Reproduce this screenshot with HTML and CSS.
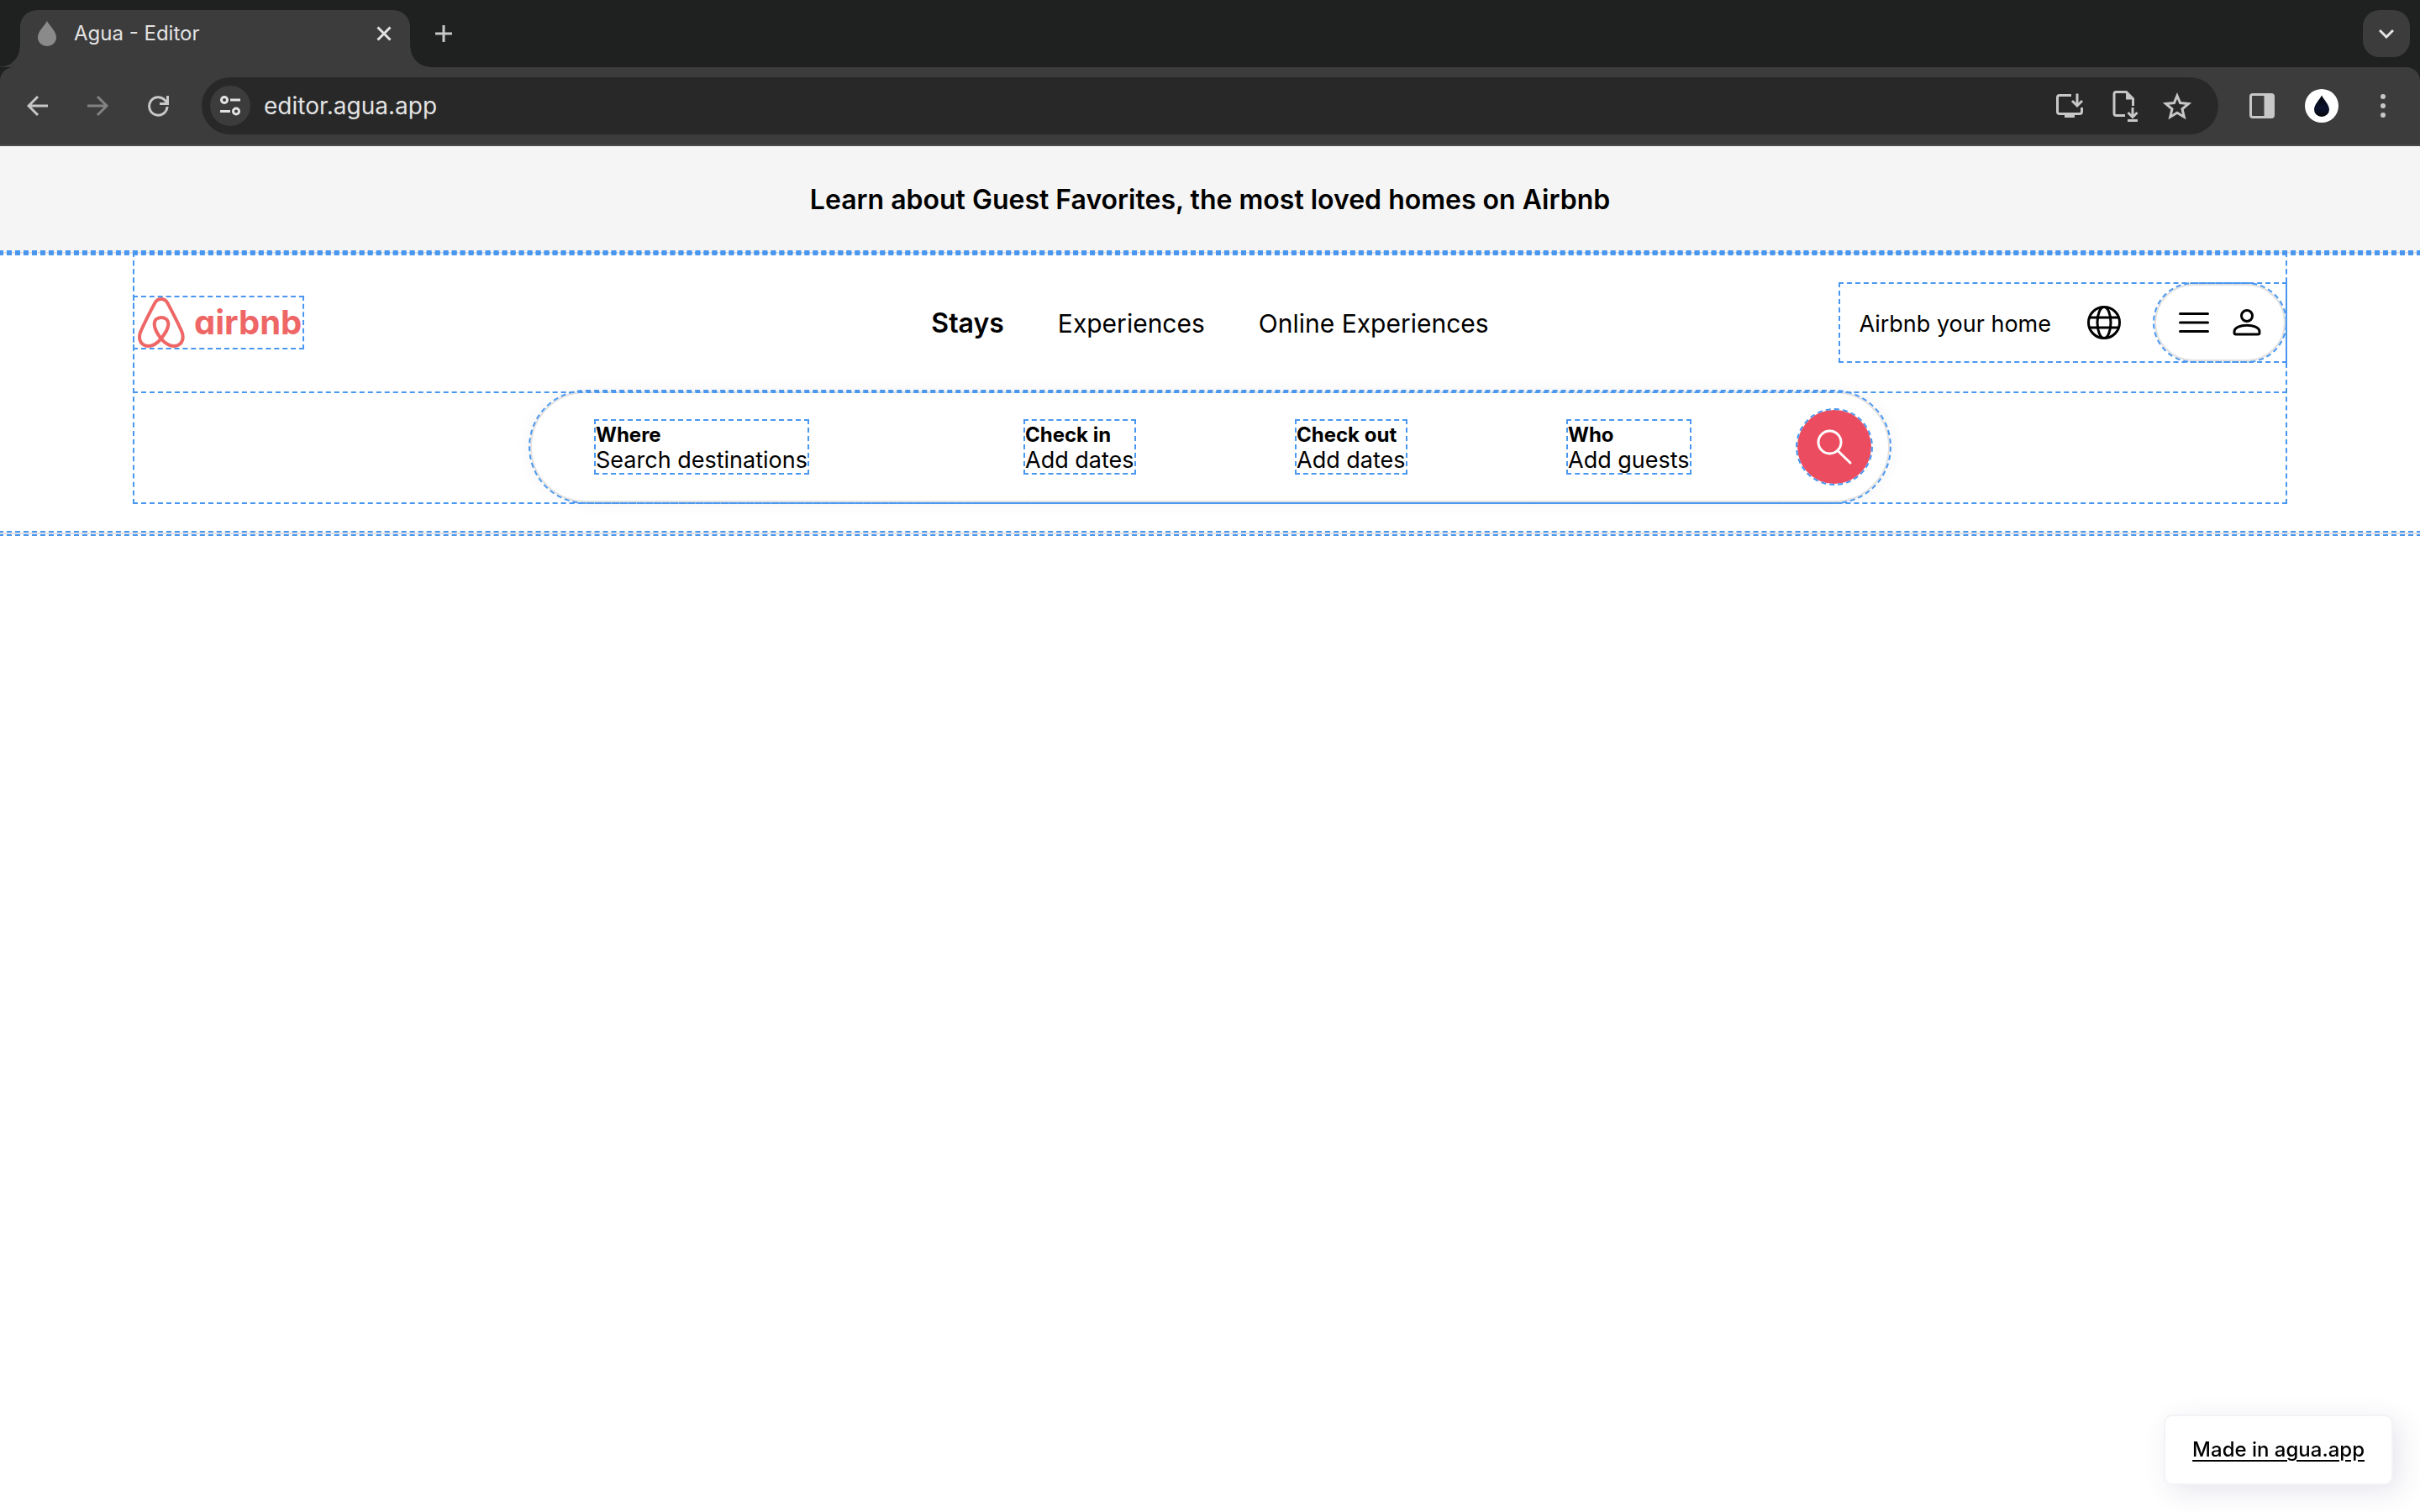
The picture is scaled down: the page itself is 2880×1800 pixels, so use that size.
FILE: index.html
```html
<!DOCTYPE html>
<html lang="en">
<head>
<meta charset="utf-8">
<meta name="viewport" content="width=device-width, initial-scale=1">
<title>Agua - Editor</title>
<link rel="stylesheet" href="styles.css">
</head>
<body>
<div class="browser">
  <div class="tabstrip">
    <div class="tab">
      <svg class="tab-drop" viewBox="0 0 22 30" aria-hidden="true"><path d="M11 0C8 6 0 12 0 19.500a11 10.500 0 0 0 22 0C22 12 14 6 11 0z"/></svg>
      <span class="tab-title">Agua - Editor</span>
      <button class="icon-button tab-close" aria-label="Close tab"><svg width="18" height="18" viewBox="0 0 18 18"><path d="M1.500 1.500l15 15M16.500 1.500l-15 15"/></svg></button>
    </div>
    <button class="icon-button tab-new" aria-label="New tab"><svg width="20" height="20" viewBox="0 0 20 20"><path d="M10 0v20M0 10h20"/></svg></button>
    <button class="icon-button tab-search" aria-label="Search tabs"><svg width="18" height="12" viewBox="0 0 18 12"><path d="M1 2l8 8 8-8"/></svg></button>
  </div>
  <div class="toolbar">
    <button class="icon-button" aria-label="Back"><svg width="26" height="26" viewBox="0 0 26 26"><path d="M25 13H2M13 2L2 13l11 11"/></svg></button>
    <button class="icon-button is-disabled" aria-label="Forward"><svg width="26" height="26" viewBox="0 0 26 26"><path d="M0 13h23M12 2l11 11-11 11"/></svg></button>
    <button class="icon-button" aria-label="Reload"><svg width="26" height="26" viewBox="0 0 26 26"><path d="M23 14A10.700 10.700 0 1 1 20 6l3 3.500M23.500 1v9.500h-9.500"/></svg></button>
    <div class="omnibox">
      <button class="icon-button site-info" aria-label="Site information"><svg width="24" height="24" viewBox="0 0 24 24"><circle cx="5" cy="5" r="3.500"/><path d="M12 5h12M0 18.500h12"/><circle cx="19" cy="18.500" r="3.500"/></svg></button>
      <input class="url" type="text" aria-label="Address" value="editor.agua.app">
      <div class="omnibox-actions">
        <button class="icon-button install" aria-label="Install app"><svg width="34" height="32" viewBox="0 0 34 32"><path d="M19 3.500H5Q2.500 3.500 2.500 6v17q0 2.500 2.500 2.500h24q2.500 0 2.500-2.500v-5M26 1.500v14M20 10l6 6 6-6"/><path class="solid" d="M11 26h12v4H11z"/></svg></button>
        <button class="icon-button" aria-label="Save page"><svg width="32" height="38" viewBox="0 0 32 38"><path d="M15 30.500H4.500q-2.500 0-2.500-2.500V5q0-2.500 2.500-2.500h12l8 8V19M24 21v12M18.500 27l5.500 5.500 5.500-5.500M18 36.500h12"/><path class="solid" d="M16 1.500v10h10z"/></svg></button>
        <button class="icon-button" aria-label="Bookmark this tab"><svg width="34" height="32" viewBox="0 0 34 32"><path d="M17 4l3.600 8.600 9.900.8-7.500 6.400 2.300 9.400-8.300-5-8.300 5 2.300-9.400-7.500-6.400 9.900-.8z"/></svg></button>
      </div>
    </div>
    <div class="toolbar-end">
      <button class="icon-button" aria-label="Side panel"><svg width="30" height="30" viewBox="0 0 30 30"><rect x="1.500" y="1.500" width="27" height="27" rx="2.500"/><path class="solid" d="M17.500 1h10v28h-10z"/></svg></button>
      <button class="icon-button avatar" aria-label="Profile"><svg width="40" height="40" viewBox="0 0 40 40"><defs><linearGradient id="ink" x2="0" y2="1"><stop offset="0" stop-color="#050608"/><stop offset=".6" stop-color="#0c1330"/><stop offset="1" stop-color="#050608"/></linearGradient></defs><path fill="url(#ink)" d="M20 7.500C17.500 13 11 18 11 24.500a9 8.500 0 0 0 18 0C29 18 22.500 13 20 7.500z"/></svg></button>
      <button class="icon-button" aria-label="Menu"><svg width="6" height="28" viewBox="0 0 6 28"><circle class="solid" cx="3" cy="3" r="3"/><circle class="solid" cx="3" cy="14" r="3"/><circle class="solid" cx="3" cy="25" r="3"/></svg></button>
    </div>
  </div>
</div>

<main class="page">
  <div class="banner">Learn about Guest Favorites, the most loved homes on Airbnb</div>
  <header class="header">
    <div class="header-inner">
      <div class="container">
        <div class="top-row">
          <a class="logo" href="#"><svg width="58" height="60" viewBox="69 222 174 180" aria-hidden="true"><path d="M155 228C143 228 138 232 133 242C118 270 92 322 83 342C78 352 78 358 78 364C78 384 92 396 110 396C126 396 142 385 155 370C170 350 181 335 181 318C181 302 170 294 155.500 294C141 294 131 302 131 318C131 335 141 350 155 370C169 385 184 396 201 396C219 396 233 384 233 364C233 358 233 352 228 342C219 322 193 270 178 242C173 232 167 228 155 228Z"/></svg><span>airbnb</span></a>
          <nav class="nav">
            <a class="is-active" href="#">Stays</a>
            <a href="#">Experiences</a>
            <a href="#">Online Experiences</a>
          </nav>
          <div class="actions">
            <a class="host" href="#">Airbnb your home</a>
            <button class="plain" aria-label="Language"><svg width="42" height="42" viewBox="0 0 42 42"><circle cx="21" cy="21" r="18.500"/><ellipse cx="21" cy="21" rx="8" ry="18.500"/><path d="M3.500 15h35M3.500 27h35"/></svg></button>
            <button class="plain menu" aria-label="Account menu"><svg width="36" height="26" viewBox="0 0 36 26"><path stroke-linecap="round" d="M1.500 2.500h33M1.500 13h33M1.500 23.500h33"/></svg><svg width="34" height="32" viewBox="0 0 34 32"><circle cx="17" cy="8" r="6.500"/><path stroke-linejoin="round" d="M2 27v1q0 2 2 2h26q2 0 2-2v-1C32 16.500 2 16.500 2 27z"/></svg></button>
          </div>
        </div>
        <form class="search">
          <button type="button" class="field"><strong>Where</strong><span>Search destinations</span></button>
          <button type="button" class="field"><strong>Check in</strong><span>Add dates</span></button>
          <button type="button" class="field"><strong>Check out</strong><span>Add dates</span></button>
          <button type="button" class="field"><strong>Who</strong><span>Add guests</span></button>
          <button type="button" class="submit" aria-label="Search"><svg width="44" height="44" viewBox="0 0 44 44"><circle cx="16.500" cy="16.500" r="13.500"/><path stroke-linecap="round" d="M26 26.500L41 41"/></svg></button>
        </form>
      </div>
    </div>
  </header>
  <a class="made-in" href="#">Made in agua.app</a>
</main>
</body>
</html>
```

FILE: styles.css
```css
:root {
  --guide: #4a97f0;
  --line: #e1e1e1;
  --chrome: #3c3c3c;
  --strip: #1f2120;
  --icon: #c7c7c7;
}

* { box-sizing: border-box; }

body {
  margin: 0;
  min-height: 100vh;
  display: flex;
  flex-direction: column;
  overflow-x: hidden;
  background: #fff;
  color: #000;
  font-family: Inter, "Liberation Sans", sans-serif;
}

button, input { font: inherit; color: inherit; }
button { border: 0; padding: 0; background: none; cursor: pointer; }
a { color: inherit; text-decoration: none; }
svg { display: block; fill: none; flex: none; }

/* Browser window */
.browser {
  position: relative;
  z-index: 1;
  background: var(--strip);
  color: #e3e3e3;
}

.tabstrip {
  display: flex;
  align-items: center;
  height: 80px;
  padding: 0 12px 0 24px;
}

.tab {
  position: relative;
  display: flex;
  align-items: center;
  align-self: flex-end;
  width: 464px;
  height: 68px;
  padding: 0 22px 12px 21px;
  border-radius: 20px 20px 0 0;
  background: var(--chrome);
}

.tab::before,
.tab::after {
  content: "";
  position: absolute;
  bottom: 0;
  width: 24px;
  height: 24px;
}
.tab::before { right: 100%; background: radial-gradient(circle at 0 0, transparent 23px, var(--chrome) 24px); }
.tab::after { left: 100%; background: radial-gradient(circle at 100% 0, transparent 23px, var(--chrome) 24px); }

.tab-drop { width: 22px; height: 30px; fill: #8a8a8a; }
.tab-title { flex: 1; padding-left: 21px; font-size: 24px; line-height: 32px; }

.icon-button { display: grid; place-items: center; flex: none; }
.icon-button svg { stroke: var(--icon); stroke-width: 3; }
.icon-button .solid { fill: var(--icon); stroke: none; }
.tab-close svg, .tab-search svg, .site-info svg { stroke: #e3e3e3; }
.tab-new { margin-left: 30px; }

.tab-search {
  width: 56px;
  height: 56px;
  margin-left: auto;
  border-radius: 20px;
  background: var(--chrome);
}

.toolbar {
  display: flex;
  align-items: center;
  gap: 46px;
  height: 94px;
  padding: 0 41px 0 32px;
  border-bottom: 2px solid #4a4a4a;
  border-radius: 16px 16px 0 0;
  background: var(--chrome);
}
.is-disabled { opacity: .5; }

.omnibox {
  flex: 1;
  display: flex;
  align-items: center;
  gap: 16px;
  height: 68px;
  margin: 0 -9px 0 -8px;
  padding: 0 32px 0 10px;
  border-radius: 34px;
  background: #282828;
}
.site-info { width: 48px; height: 48px; border-radius: 50%; background: var(--chrome); }
.url {
  flex: 1;
  min-width: 0;
  padding: 0;
  border: 0;
  outline: 0;
  background: none;
  font-size: 28px;
}
.omnibox-actions { display: flex; align-items: center; gap: 28px; }
.install { margin-right: 6px; }

.toolbar-end { display: flex; align-items: center; gap: 36px; }
.avatar { border-radius: 50%; background: #fff; }
.avatar svg { stroke: none; }
.toolbar-end .icon-button:last-child { margin-left: 14px; }

/* Edited page, with layout guides */
.page { flex: 1; }

.banner {
  margin-bottom: -2px;
  padding: 44px 32px;
  background: #f5f5f5;
  outline: 2px dashed var(--guide);
  font-size: 32px;
  font-weight: 600;
  line-height: 40px;
  text-align: center;
}

.header {
  position: relative;
  padding-bottom: 2px;
  border: solid var(--line);
  border-width: 2px 0;
  outline: 2px dashed var(--guide);
}

.header-inner { padding: 0 160px 34px; outline: 2px dashed var(--guide); }
.container { outline: 2px dashed var(--guide); }

.top-row {
  display: grid;
  grid-template-columns: 1fr auto 1fr;
  align-items: center;
  min-height: 164px;
  outline: 2px dashed var(--guide);
}

.logo {
  justify-self: start;
  display: flex;
  align-items: center;
  gap: 10px;
  width: 200px;
  height: 60px;
  padding-left: 3px;
  outline: 2px dashed var(--guide);
  color: #ee6766;
  font-size: 40px;
  font-weight: 700;
  line-height: 60px;
  font-feature-settings: "cv11";
}
.logo svg { stroke: currentColor; stroke-width: 12; }

.nav {
  display: flex;
  align-items: baseline;
  gap: 64px;
  padding-top: 2px;
  font-size: 30px;
  line-height: 40px;
}
.is-active { font-size: 32px; font-weight: 600; }

.actions {
  justify-self: end;
  display: flex;
  align-items: center;
  height: 92px;
  padding-left: 22px;
  outline: 2px dashed var(--guide);
  font-size: 27px;
}
.host { margin-right: 42px; padding-top: 2px; }
.plain svg { stroke: #000; stroke-width: 3; }

.menu {
  display: flex;
  align-items: center;
  justify-content: center;
  gap: 28px;
  width: 156px;
  height: 92px;
  margin-left: 39px;
  border: 2px solid var(--line);
  border-radius: 46px;
  outline: 2px dashed var(--guide);
}

.search {
  display: grid;
  grid-template-columns: 511fr 323fr 323fr 273fr 88px;
  align-items: center;
  justify-items: start;
  max-width: 1618px;
  height: 132px;
  margin: 0 auto;
  padding: 0 20px 0 76px;
  border: 2px solid var(--line);
  border-radius: 66px;
  outline: 2px dashed var(--guide);
  box-shadow: 0 0 20px rgba(0, 0, 0, .06);
}

.field {
  display: flex;
  flex-direction: column;
  padding-top: 2px;
  outline: 2px dashed var(--guide);
  font-size: 27px;
  line-height: 30px;
  text-align: left;
}
.field strong { font-size: 24px; font-weight: 700; }

.submit {
  display: grid;
  place-items: center;
  width: 88px;
  height: 88px;
  border-radius: 50%;
  outline: 2px dashed var(--guide);
  background: #ec4c60;
}
.submit svg { stroke: #fff; stroke-width: 3; }

.made-in {
  position: fixed;
  right: 32px;
  bottom: 32px;
  padding: 24px 32px;
  border: 2px solid #f3f2f6;
  border-radius: 10px;
  background: #fff;
  box-shadow: 8px 8px 32px rgba(60, 40, 100, .12);
  font-size: 24px;
  font-weight: 500;
  line-height: 32px;
  text-decoration: underline;
  text-underline-offset: 4px;
}
```
